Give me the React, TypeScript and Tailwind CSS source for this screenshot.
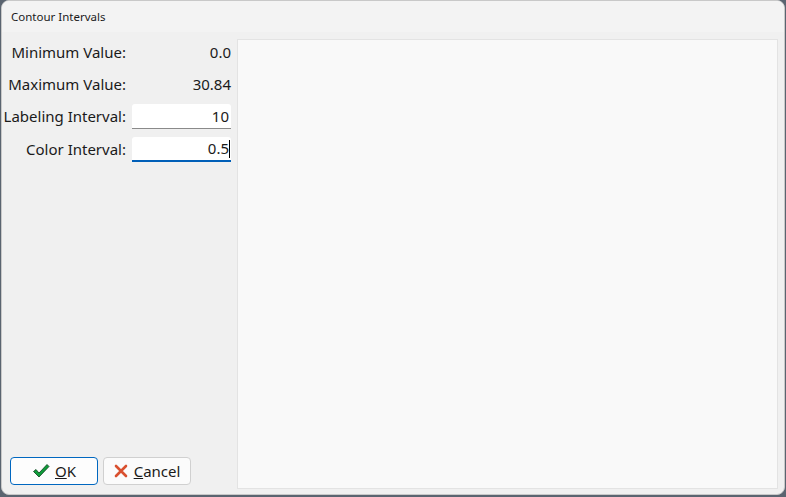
export default function App() {
  const font = { fontFamily: '"Segoe UI", "Noto Sans", "Open Sans", sans-serif' };
  return (
    <div className="w-[786px] h-[497px] bg-[#5a6470] overflow-hidden" style={font}>
      <div className="w-[784px] h-[495px] ml-px rounded-lg bg-[#f0f0f0] border border-[#c8c8c8] flex flex-col overflow-hidden">
        <div className="h-[31px] shrink-0 bg-[#f3f3f3] flex items-center pl-[9px] text-[11.5px] text-[#1a1a1a]">
          Contour Intervals
        </div>
        <div className="flex-1 flex pt-[7px] pb-[5px] pr-[6px]">
          <div className="w-[235px] shrink-0 flex flex-col text-[15px] text-[#1a1a1a]">
            <div className="flex h-[26px] items-center gap-[6px]">
              <div className="w-[124px] text-right">Minimum Value:</div>
              <div className="w-[99px] text-right">0.0</div>
            </div>
            <div className="flex h-[26px] mt-[6px] items-center gap-[6px]">
              <div className="w-[124px] text-right">Maximum Value:</div>
              <div className="w-[99px] text-right">30.84</div>
            </div>
            <div className="flex h-[25px] mt-[7px] items-center gap-[6px]">
              <div className="w-[124px] text-right">Labeling Interval:</div>
              <div className="w-[99px] h-[25px] bg-white border-b border-[#8a8a8a] rounded-t-[3px] flex items-center justify-end pr-[2px]">10</div>
            </div>
            <div className="flex h-[25px] mt-[8px] items-center gap-[6px]">
              <div className="w-[124px] text-right">Color Interval:</div>
              <div className="w-[99px] h-[25px] bg-white border-b-2 border-[#005fb8] rounded-t-[3px] flex items-center justify-end pr-[1px]">
                0.5<span className="w-px h-[18px] bg-black" />
              </div>
            </div>
            <div className="mt-auto flex gap-[5px] pl-[8px] pb-[4px]">
              <button className="w-[88px] h-[28px] bg-[#fdfdfd] border border-[#0067c0] rounded-[4px] flex items-center justify-center gap-[5px]">
                <svg width="18" height="16" viewBox="0 0 18 16">
                  <path d="M1.5 8.5 L4 6.5 L7 10 L15 1.5 L17 3.5 L7 14 Z" fill="#0f9d3a" stroke="#0a3d1a" strokeWidth="0.8" strokeLinejoin="round" />
                </svg>
                <span><span className="underline">O</span>K</span>
              </button>
              <button className="w-[88px] h-[28px] bg-[#fbfbfb] border border-[#d0d0d0] rounded-[4px] flex items-center justify-center gap-[6px]">
                <svg width="14" height="14" viewBox="0 0 14 14">
                  <path d="M2 2 L12 12 M12 2 L2 12" stroke="#d9502f" strokeWidth="2.6" strokeLinecap="round" />
                </svg>
                <span><span className="underline">C</span>ancel</span>
              </button>
            </div>
          </div>
          <div className="flex-1 bg-[#f9f9f9] border border-[#e3e3e3]" />
        </div>
      </div>
    </div>
  );
}
